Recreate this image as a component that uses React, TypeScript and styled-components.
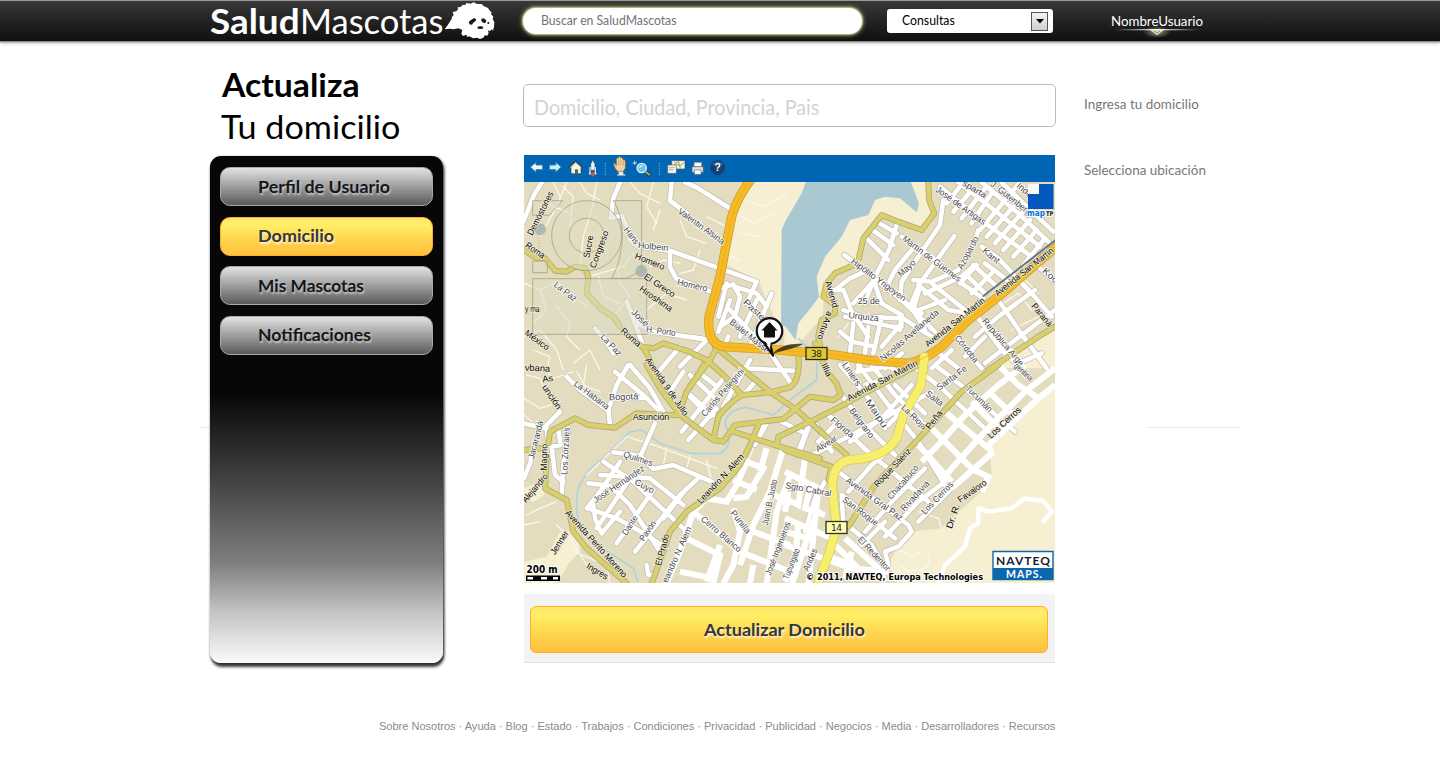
import React, { useLayoutEffect, useRef, useState } from "react";
import styled, { createGlobalStyle, css } from "styled-components";

const Global = createGlobalStyle`
  *, *::before, *::after { box-sizing: border-box; }
  body { margin: 0; background: #fff; font-family: Lato, "Open Sans", sans-serif; }
  button, input { font: inherit; }
`;

/* Text set to a fixed measure: the glyphs are condensed or widened to fill it. */
const Measure = styled.span<{ $w: number }>`
  display: inline-block;
  width: ${(p) => p.$w}px;
  white-space: nowrap;
  text-align: left;
`;
const Glyphs = styled.span`
  display: inline-block;
  transform-origin: 0 50%;
`;
function Fit({ w, children }: { w: number; children: React.ReactNode }) {
  const ref = useRef<HTMLSpanElement>(null);
  const [scale, setScale] = useState(1);
  useLayoutEffect(() => {
    if (ref.current) setScale(w / ref.current.offsetWidth);
  }, [w]);
  return (
    <Measure $w={w}>
      <Glyphs ref={ref} style={{ transform: `scaleX(${scale})` }}>{children}</Glyphs>
    </Measure>
  );
}

const Page = styled.div`
  position: relative;
  width: 1440px;
  height: 770px;
  overflow: hidden;
  background: #fff;
`;
const Header = styled.header`
  display: flex;
  align-items: center;
  height: 41px;
  padding-left: 210px;
  border-top: 1px solid #9a9a9a;
  background: linear-gradient(#383838, #232323 50%, #101010);
  box-shadow: 0 1px 1px #8a8a8a, 0 2px 3px #aaa;
`;
const Logo = styled.div`
  display: flex;
  align-items: center;
  width: 313px;
  height: 40px;
  color: #fff;
  font-size: 34px;
  line-height: 40px;
  b { font-weight: 700; }
`;
const DogMark = styled.svg`
  flex: none;
  width: 52px;
  height: 40px;
  margin-left: 1px;
`;
const SearchPill = styled.div`
  width: 339px;
  height: 26px;
  padding-left: 18px;
  border-radius: 13px;
  background: #fff;
  box-shadow: 0 0 2px 1px #c9cd95, 0 0 5px 1px #8a8d5c;
  color: #77717a;
  font-size: 12.5px;
  line-height: 25px;
`;
const SelectBox = styled.div`
  display: flex;
  align-items: center;
  justify-content: space-between;
  width: 166px;
  height: 24px;
  margin-left: 25px;
  padding: 0 5px 0 15px;
  border-radius: 3px;
  background: #fff;
  color: #000;
  font-size: 12.5px;
  line-height: 24px;
`;
const SelectArrow = styled.span`
  display: grid;
  place-items: center;
  width: 17px;
  height: 19px;
  border: 1px solid #555;
  background: linear-gradient(#f4f4f4, #cfcfcf);
`;
const UserName = styled.div`
  position: relative;
  margin-left: 58px;
  color: #fff;
  font-size: 13px;
  line-height: 39px;
`;
const UserGlow = styled.svg`
  position: absolute;
  left: 0;
  top: 23px;
  width: 92px;
  height: 14px;
`;
const Hairline = styled.i<{ $x: number; $w: number }>`
  position: absolute;
  left: ${(p) => p.$x}px;
  top: 427px;
  width: ${(p) => p.$w}px;
  height: 1px;
  background: #ebebeb;
`;
const Main = styled.main`
  position: relative;
  display: grid;
  grid-template-columns: 233px 533px 160px;
  column-gap: 80px;
  height: 622px;
  padding-left: 210px;
`;
const Aside = styled.aside`
  padding-top: 22px;
`;
const Title = styled.h1<{ $strong?: boolean }>`
  margin: 0;
  padding-left: ${(p) => (p.$strong ? 12 : 11)}px;
  height: 42px;
  color: #000;
  font-size: 33px;
  font-weight: ${(p) => (p.$strong ? 700 : 400)};
  line-height: 43px;
`;
const SideMenu = styled.nav`
  display: flex;
  flex-direction: column;
  gap: 10.67px;
  height: 507px;
  margin-top: 9px;
  padding: 11px 10px;
  border-radius: 11px;
  background: linear-gradient(#070707 0 47%, #3b3b3b 62%, #808080 80.5%, #c4c4c4 90%, #fafafa);
  box-shadow: 1px 4px 3px rgba(0, 0, 0, 0.75), 1px 1px 3px rgba(0, 0, 0, 0.45);
`;
const gold = css`
  border: 1px solid #ffae2b;
  background: linear-gradient(#ffe86a, #ffee66 20%, #ffd34c 62%, #ffc13c);
  color: #363636;
  text-shadow: 1px 2px 2px rgba(255, 255, 255, 0.8);
`;
const MenuItem = styled.button<{ $active?: boolean }>`
  flex: none;
  width: 213px;
  height: 39px;
  padding: 0 0 0 37px;
  border: 1px solid #a9a9a9;
  border-radius: 10px;
  background: linear-gradient(#e2e2e2, #5a5a5a);
  color: #161616;
  font-size: 17.5px;
  font-weight: 700;
  line-height: 36px;
  text-align: left;
  text-shadow: 1px 2px 2px rgba(255, 255, 255, 0.55);
  ${(p) => p.$active && gold}
`;
const Center = styled.section`
  padding-top: 43px;
`;
const AddressField = styled.div`
  width: 533px;
  height: 43px;
  padding-left: 10px;
  border: 1px solid #bcbcbc;
  border-radius: 5px;
  background: #fff;
  color: #d3d3d3;
  font-size: 21px;
  line-height: 43px;
`;
const MapFrame = styled.div`
  width: 531px;
  margin: 28px 0 0 1px;
`;
const MapToolbar = styled.div`
  height: 27px;
  background: #0066b3;
  svg { display: block; }
`;
const MapCanvas = styled.svg`
  display: block;
  width: 531px;
  height: 401px;
  background: #e4dcbe;
`;
const SubmitPanel = styled.div`
  width: 531px;
  height: 69px;
  margin: 11px 0 0 1px;
  padding: 12px 7px 0 6px;
  border-bottom: 1px solid #e0e0e0;
  border-radius: 3px 3px 0 0;
  background: #f3f3f3;
`;
const SubmitButton = styled.button`
  display: block;
  width: 518px;
  height: 47px;
  padding: 0 0 0 173px;
  border-radius: 6px;
  ${gold}
  font-size: 17.5px;
  font-weight: 700;
  line-height: 45px;
  text-align: left;
`;
const Hints = styled.div`
  display: flex;
  flex-direction: column;
  gap: 46px;
  padding-top: 53px;
  margin-left: -52px;
  color: #777;
  font-size: 13px;
  line-height: 20px;
`;
const Footer = styled.footer`
  display: flex;
  justify-content: flex-end;
  width: 1055px;
  padding-top: 56px;
  color: #8b8b8b;
  font-family: "Liberation Sans", Arial, sans-serif;
  font-size: 11px;
  line-height: 14px;
`;

/* Map tiles: each is digitised at three units per pixel from its own origin. */
type Tile = 0 | 1 | 2 | 3 | 4;
const origin = ["translate(520 150)", "translate(785 150)", "translate(520 365)", "translate(785 365)", "translate(690 300)"];
const at = (t: Tile) => `${origin[t]} scale(.33333)`;

type Kind = "lane" | "street" | "avenue" | "route" | "highway";
const paint: Record<Kind, { w: number; fill: string; edge?: string; edgeW?: number }> = {
  lane: { w: 4, fill: "#faf7ec" },
  street: { w: 13.5, fill: "#ffffff", edge: "#c3beb2", edgeW: 18 },
  avenue: { w: 13, fill: "#d9d06c", edge: "#b0a978", edgeW: 18 },
  route: { w: 24, fill: "#f7ef6a", edge: "#d0c766", edgeW: 28 },
  highway: { w: 23, fill: "#f6bb24", edge: "#cf9c33", edgeW: 28 },
};

const roads: Record<Kind, [Tile, string][]> = {
  lane: [
    [0, "M140 97L110 170L60 260M60 150L150 190M230 97L215 180L190 260L180 350M130 110L160 140L150 230M330 97L360 130L420 160M400 97L380 170L410 220M12 400L60 420L110 395L140 420L200 470M60 420L80 480L40 520M110 470L150 520L140 560L180 600M12 560L60 540L110 600L130 660M205 380L240 370L310 350L340 310M280 500L330 440L300 400L290 350M380 480L440 430L500 450M420 180L400 240M480 210L500 260L560 280M540 300L520 360L480 370M560 200L620 230M650 190L700 220L760 190M660 250L720 260M680 150L730 170L800 130M600 310L660 330"],
    [0, "M40 600L90 620L80 660M160 640L210 600L240 660M390 350L430 330L480 340M235 380L250 440L300 460M100 97L120 140M180 97L200 130L240 150"],
    [1, "M160 560L190 520M640 470L700 430L740 480M680 540L760 500M720 390L760 430"],
    [2, "M12 100L60 130L120 110M20 30L60 40L80 90M60 0L100 40L160 20M200 0L190 60L240 80M200 330L320 215L400 240L590 310M440 250L430 300M510 270L500 310M560 285L575 350L530 345M12 150L60 190M20 450L60 430L110 410M12 480L60 470M110 480L150 520L200 600M160 560L260 600L270 655M700 250L680 300M170 20L210 90"],
    [3, "M450 390L500 370L560 310M400 440L460 460L470 490M330 550L380 575L410 560M345 600L370 620L420 610Q440 590 430 570"],
  ],
  street: [
    [0, "M10 215L42 135L70 90M300 97L280 145L272 205L305 197L325 240L330 270L350 287L450 302L710 395L680 460M455 97L450 152L500 190M495 97L530 112L630 175M450 302L450 350L468 385L580 428M320 455L345 520L370 590M345 515L400 545L570 570M225 535L260 575L280 610M600 415L640 403L660 440L645 500L600 530M620 400L595 500M650 412L710 430L740 470M755 430L690 590M630 480L740 600M625 560L612 590M480 590L420 660M560 570L480 650"],
    [1, "M465 110L590 212L740 320M520 97L640 190L765 290M590 97L700 190L790 275M650 97L805 245M485 160L535 97M505 185L565 115M530 205L600 115M560 220L620 130M585 240L665 145L705 97M605 260L685 170M630 280L710 190M655 300L735 210M685 320L755 240M715 345L780 265M475 150L465 225L400 320L350 395L345 450M335 225L312 300L265 390L240 460M245 265L310 330M260 238L325 285M275 215L335 250M350 260L440 320L530 400L595 445M508 258L405 400L375 470M178 315L250 370L350 450L410 490M400 405L490 480L550 490M385 390L440 395L520 360L570 270L580 240M420 430L530 380L570 345M540 370L600 430M565 345L630 405M525 400L575 345M560 430L620 370M590 290L640 325L740 430M600 340L680 400M150 420L195 385L250 360M140 420L175 420L200 485L250 560M265 390L290 460L350 495L345 540M175 480L230 500L345 505M180 500L320 530L350 530M165 545L200 575L270 590M205 520L195 610M250 530L240 610M290 500L265 610M350 520L290 590M345 500L440 560M350 450L450 545M400 480L480 450M440 400L540 480L580 500M405 410L385 480L420 540M205 460L260 400M380 300L330 360L300 420"],
    [1, "M640 450L715 560L785 655M700 390L740 430L800 500M570 490L650 600L700 645M510 560L590 655M450 600L520 655M570 560L640 500L750 420M600 640L690 570L810 480M540 620L600 560M760 350L810 395M500 600L440 655M640 640L680 600M700 640L770 610M350 610L300 655M390 655L400 630M180 620L190 655M230 630L220 655M290 640L330 660"],
    [2, "M140 35L180 75L262 135M270 180L265 135L290 60L325 0M285 20L370 90L430 150M330 0L390 70L430 140M275 100L380 98M405 175L365 265M120 140L75 185M12 175L80 190L85 240M115 195L122 240L95 245L105 330L130 350M145 190L130 300L125 395M35 250L32 290L12 340M280 262L360 272L400 312L460 300L540 335L575 350M250 290L340 350L500 500M240 330L390 340L490 420M205 355L270 362L330 420L420 560M200 430L240 380L300 290M230 490L330 340M290 535L400 375M345 560L480 390L540 335M205 430L290 460L380 510L440 550M220 420L225 460L245 505L300 440M430 460L500 370M380 600L385 630L405 630M485 200L560 105L610 40M505 225L590 130M450 80L490 20M510 90L580 150M740 175L705 240"],
    [4, "M0 225L70 290M25 215L75 255M0 290L60 350M155 205L310 212M245 165L300 245M275 365L345 400L330 450M355 380L320 465M220 375L200 420M200 240L165 280M100 320L180 180M0 110L60 120M120 0L85 95M200 0L150 110"],
    [3, "M165 0L260 110L300 190M220 0L310 120L400 230L480 360M260 0L330 90L420 180M170 90L230 170L330 270M130 150L260 270L430 410M160 320L370 480M170 390L330 520M80 270L200 210L330 140L440 80M195 230L290 160L380 60M215 20L330 0M240 60L350 30M330 60L420 145M190 380L260 300L330 240M240 500L330 400L420 310M300 515L400 410L480 350M400 470L520 350M370 480L380 500L340 545L300 560L310 600M170 400L175 470L260 540L300 610M70 190L40 270M95 180L140 260M160 170L100 230M230 540L300 470M120 350L90 400L60 500M380 110L310 180"],
    [3, "M380 0L470 70L610 200M450 0L540 70L690 200"],
  ],
  avenue: [
    [0, "M12 300L50 325L75 325L105 362L140 365L165 350L195 355L205 380L200 430L240 475L280 500L300 530M340 570L370 592L385 620L400 660M365 590L400 595L430 580L500 602"],
    [1, "M430 97L432 150L448 190L410 240L340 215L290 195L235 265L218 340L150 370L125 400L115 440L150 465L150 490L110 510L100 560L108 600M810 530L760 560L640 640L610 660"],
    [2, "M12 255L60 250M85 235L90 200L165 160L205 180L285 188L320 165L350 145L440 150L475 150L500 80L540 20L550 0M80 280L75 370L140 405L160 500L200 550L320 655M380 0L420 70L480 150L580 225M715 180L690 240L660 300L600 370L500 440L450 500L430 560L395 655"],
    [4, "M75 140L240 275L320 330L470 465M80 145L60 180L0 260M-10 152L50 180L100 225L155 285L240 277L300 262Q332 240 325 165M70 420L85 350Q120 305 155 287M70 420L100 425L135 375L280 357L360 290L430 300L452 285L440 250L410 215L375 130M130 395L260 437L390 475M350 370L480 305M260 437L265 410L350 370"],
    [3, "M190 110L400 0M0 255L140 305L130 345M640 0L530 80L430 190L270 360L190 485"],
  ],
  route: [[3, "M418 -25L408 60L355 150L335 220Q300 280 190 285Q140 300 142 370L155 490L130 570L95 665"]],
  highway: [
    [0, "M695 85Q650 145 635 200L600 380L567 500Q560 580 610 590L810 602"],
    [1, "M0 602L130 612L260 632L370 640Q420 630 470 590L550 510L640 440L820 285"],
  ],
};

/* Streets of the unmapped southern blocks carry no outline. */
const blocks: [Tile, string][] = [
  [2, "M520 440L480 560L440 655M520 440L560 400L620 410L650 360L680 290L730 310L680 395L640 400M640 430L660 500L640 600L610 655M520 440L660 560L810 620M740 250L720 320M790 250L750 380L700 480L660 600M750 380L810 420M700 500L810 540M500 520L600 570L580 655M640 345L710 375M480 620L580 640M700 600L690 655M770 440L740 655M600 540L560 650M810 330L770 440"],
  [3, "M0 320L100 370L70 660M0 460L140 520M40 470L30 600L0 650M100 430L60 540L20 660M0 540L200 610L310 620M120 570L200 600M10 380L0 440M60 280L40 420L0 400M80 350L60 430L120 450M180 520L280 610L300 650M150 540L230 620M0 500L70 520M200 560L180 640"],
  [3, "M720 0L640 60L540 150L460 240L410 290M810 10L720 80L600 200L500 310L470 350M760 100L700 60L640 0M690 155L610 80M650 200L560 110M610 250L480 140M560 310L440 190M500 350L400 240M810 60L760 100L610 240L620 265L500 370M555 310L610 335L590 380"],
];

type Label = [Tile, number, number, number, number, string, 0 | 1];
const labels: Label[] = [
  [0, 37, 258, 101, 130, "Demóstones", 1], [0, 14, 290, 67, 326, "Roma", 1],
  [0, 208, 325, 220, 258, "Sucre", 1], [0, 226, 356, 266, 246, "Congreso", 1],
  [0, 472, 188, 606, 284, "Valentin Alsina", 0], [0, 310, 240, 345, 285, "Hans", 0],
  [0, 353, 294, 444, 303, "Holbein", 0], [0, 343, 325, 430, 360, "Homero", 1],
  [0, 470, 404, 560, 425, "Homero", 0], [0, 370, 384, 458, 443, "El Greco", 1],
  [0, 356, 421, 450, 486, "Hiroshima", 1], [0, 100, 407, 162, 456, "La Paz", 0],
  [0, 240, 562, 294, 620, "La Paz", 0], [0, 332, 488, 376, 532, "José", 0], [0, 378, 546, 466, 558, "H. Porto", 0],
  [0, 300, 545, 354, 592, "Roma", 1], [0, 12, 553, 80, 602, "México", 1],
  [0, 15, 485, 58, 486, "y ma", 1], [0, 668, 459, 725, 513, "Paste", 0],
  [0, 627, 520, 740, 610, "Bialet Masse", 0],
  [1, 450, 123, 595, 226, "José de Artigas", 0], [1, 530, 105, 598, 145, "sparta", 0],
  [1, 615, 106, 730, 196, "J. Gutenberg", 0], [1, 693, 110, 733, 144, "Inde", 0],
  [1, 350, 270, 520, 397, "Martín de Güemes", 0], [1, 196, 338, 355, 455, "Hipólito Yrigoyen", 0],
  [1, 348, 382, 394, 340, "Mayo", 0], [1, 532, 360, 582, 265, "Azopardo", 0],
  [1, 590, 305, 635, 342, "Kant", 0], [1, 218, 463, 284, 463, "25 de", 0],
  [1, 190, 504, 280, 514, "Urquiza", 0], [1, 295, 635, 463, 490, "Nicolás Avellaneda", 0],
  [1, 429, 592, 602, 455, "Avenida San Martín", 1], [1, 638, 440, 808, 305, "Avenida San Martín", 1],
  [1, 738, 469, 790, 532, "Paraná", 1], [1, 590, 514, 705, 650, "República Arge", 0],
  [1, 508, 565, 568, 640, "Córdoba", 0], [1, 770, 365, 810, 400, "Koc", 0],
  [1, 120, 395, 143, 475, "Avenid", 1], [1, 127, 482, 96, 565, "a Arturo", 1],
  [1, 108, 645, 126, 682, "Illia", 1],
  [2, 14, 17, 90, 20, "vbana", 1], [2, 68, 52, 100, 48, "As", 1], [2, 65, 67, 112, 135, "unción", 1],
  [2, 160, 60, 260, 135, "La Habana", 0], [2, 267, 106, 355, 103, "Bogotá", 0],
  [2, 338, 166, 448, 166, "Asunción", 1], [2, 375, -15, 492, 155, "Avenida 9 de Julio", 1],
  [2, 555, 157, 674, 20, "Carlos Pellegrini", 0], [2, 42, 283, 70, 170, "Jacarandá", 0],
  [2, 80, 317, 82, 237, "Magno", 1], [2, 18, 415, 85, 335, "Alejandro", 1],
  [2, 142, 330, 149, 188, "Los Zorzales", 0], [2, 308, 275, 395, 304, "Quilmes", 0],
  [2, 228, 415, 375, 315, "José Hernández", 0], [2, 342, 357, 397, 386, "Cuyo", 0],
  [2, 320, 513, 354, 458, "Dante", 0], [2, 371, 530, 410, 475, "Pavón", 0],
  [2, 543, 418, 674, 277, "Leandro N. Alem", 1], [2, 541, 465, 655, 563, "Cerro Blanco", 0],
  [2, 423, 604, 448, 510, "El Prado", 1], [2, 442, 655, 516, 490, "eandro N. Alem", 0],
  [2, 134, 445, 310, 640, "Avenida Perito Moreno", 1], [2, 105, 571, 147, 504, "Jenner", 1],
  [2, 197, 608, 258, 645, "Ingres", 1], [2, 630, 445, 680, 508, "Punilla", 0],
  [2, 743, 482, 772, 345, "Juan B. Justo", 0], [2, 752, 633, 812, 475, "José Ingenieros", 0],
  [3, 192, 109, 400, 0, "Avenida San Martín", 1], [3, 170, 0, 215, 65, "Liniers", 0],
  [3, 240, 110, 294, 190, "Maipú", 0], [3, 192, 137, 255, 222, "Belgrano", 0],
  [3, 135, 168, 198, 220, "Florida", 0], [3, 99, 262, 158, 225, "Alvear", 0],
  [3, 347, 130, 415, 195, "La Rioja", 0], [3, 420, 90, 467, 125, "Salta", 0],
  [3, 463, 77, 548, 15, "Santa Fe", 0], [3, 540, 72, 612, 143, "Tucumán", 0],
  [3, 434, 195, 474, 145, "Peña", 1], [3, 278, 368, 380, 260, "Roque Sáenz", 1],
  [3, 180, 350, 346, 468, "Avenida Gral Paz", 0], [3, 170, 408, 272, 484, "San Roque", 0],
  [3, 318, 405, 402, 310, "Chacabuco", 0], [3, 358, 440, 435, 357, "Rivadavia", 0],
  [3, 420, 450, 507, 360, "Los Cerros", 0], [3, 618, 222, 710, 137, "Los Cerros", 1],
  [3, 500, 493, 525, 420, "Dr. R.", 1], [3, 526, 414, 607, 357, "Favaloro", 1],
  [3, 0, 370, 137, 394, "Sgto Cabral", 0], [3, 217, 525, 305, 620, "El Redentor", 0],
  [3, 685, 5, 735, 50, "gentina", 0], [3, 10, 645, 45, 555, "Tupungato", 0],
  [3, 70, 620, 98, 555, "Andes", 0],
];

function StreetLabel({ l: [t, x1, y1, x2, y2, name, dark] }: { l: Label }) {
  const len = Math.hypot(x2 - x1, y2 - y1);
  const deg = (Math.atan2(y2 - y1, x2 - x1) * 180) / Math.PI;
  return (
    <g transform={at(t)}>
      <text
        transform={`translate(${x1} ${y1}) rotate(${deg})`}
        textLength={len}
        lengthAdjust="spacingAndGlyphs"
        fontFamily="Liberation Sans, Arial, sans-serif"
        fontSize="27"
        fill={dark ? "#080808" : "#454545"}
        stroke={dark ? "#f1ecd6" : "#fff"}
        strokeWidth="5"
        strokeLinejoin="round"
        paintOrder="stroke"
      >
        {name}
      </text>
    </g>
  );
}

function CityMap() {
  const kinds: Kind[] = ["lane", "street", "avenue", "highway", "route"];
  return (
    <MapCanvas viewBox="524 182 531 401">
      <g fill="#f6efd2">
        <path transform={at(0)} d="M700 90L812 90V570L770 520L740 450L715 390L620 345L640 210Z" />
        <path transform={at(1)} d="M-2 90H428L440 185L410 235L330 215L290 195L235 265L215 345L140 375L120 400L112 500L60 560L30 600L-2 600ZM812 530L700 595L640 655H812Z" />
        <path transform={at(2)} d="M12 370L60 350L75 390L40 410L12 400ZM12 655V590L80 575L120 500L175 500L180 560L150 590L110 655Z" />
        <path transform={at(3)} d="M815 55L760 100L700 155L615 245L620 330L600 370L500 460L470 490L380 500L335 550L310 600L340 660H815Z" />
      </g>
      <path fill="#a9c8d2" transform={at(1)} d="M65 90L50 130L0 215L-10 240L-12 525L2 530L32 570L40 520L80 470L102 440L95 380L120 320L170 260L195 210L250 195L270 150L300 140L345 145L395 187L402 160L375 90Z" />
      <g fill="none" stroke="#b0d2da" strokeWidth="5">
        <path transform={at(2)} d="M355 655L340 610L210 525Q160 480 172 380Q190 320 250 280L330 200L365 195L420 235L510 265" />
        <path transform={at(4)} d="M0 460L90 460Q135 440 105 370Q110 330 170 322L250 345L300 300L380 240L380 170L325 115" />
      </g>
      <g fill="none" strokeLinejoin="round" strokeLinecap="round">
        {kinds.map((k) => (
          <g key={k}>
            {paint[k].edge &&
              roads[k].map(([t, d], i) => (
                <path key={i} transform={at(t)} d={d} stroke={paint[k].edge} strokeWidth={paint[k].edgeW} />
              ))}
            {roads[k].map(([t, d], i) => (
              <path key={i} transform={at(t)} d={d} stroke={paint[k].fill} strokeWidth={paint[k].w} />
            ))}
            {k === "street" &&
              blocks.map(([t, d], i) => (
                <path key={`b${i}`} transform={at(t)} d={d} stroke="#fff" strokeWidth="18" strokeLinejoin="miter" strokeLinecap="butt" />
              ))}
          </g>
        ))}
        {roads.highway.map(([t, d], i) => (
          <path key={i} transform={at(t)} d={d} stroke="#e3a71f" strokeWidth="2" />
        ))}
        <path transform={at(1)} d="M595 438L812 270" stroke="#65798a" strokeWidth="6" />
        <path transform={at(3)} d="M460 660L480 600L540 545L555 490L580 475L580 430L610 440L680 430L720 400L775 408L800 440L775 470" stroke="#fff" strokeWidth="13" />
      </g>

      <g transform={at(0)} fill="#d9dcc3" fillOpacity=".5" stroke="#8e8e78" strokeOpacity=".6" strokeWidth="3">
        <path d="M38 152H128L88 196H38ZM280 152H365V362L320 385H275Q306 330 307 255Q306 190 280 152ZM38 333H82V368H38Z" />
        <path fillRule="evenodd" d="M200 152a105 105 0 1 0 .1 0ZM200 205a52 52 0 1 1-.1 0Z" />
        <rect x="38" y="386" width="342" height="167" />
        <path d="M57 215V320" strokeDasharray="3 5" />
        <g fill="#9fb0ad" fillOpacity=".8" stroke="none"><circle cx="60" cy="238" r="18" /><circle cx="364" cy="363" r="18" /></g>
      </g>

      {labels.map((l, i) => <StreetLabel key={i} l={l} />)}

      <g fontFamily="DejaVu Sans, sans-serif">
        <path d="M773 354C778 346 792 343 803 344C798 348 786 349 773 354Z" fill="#1b1808" opacity=".75" />
        <path d="M762 340L773 355.500L770 343Z" fill="#fff" stroke="#111" strokeWidth="2.200" strokeLinejoin="round" />
        <circle cx="769.5" cy="331" r="12.8" fill="#fff" stroke="#111" strokeWidth="2.2" />
        <path d="M763.500 339L770 348L771 340Z" fill="#fff" />
        <path d="M769.5 322L761.5 330.500H764V337.500H775V330.500H777.500Z" fill="#111" />
        <rect x="806" y="347.500" width="21" height="12" fill="#ddc936" stroke="#302c0c" strokeWidth="1.3" />
        <text x="811" y="357" fontSize="9" textLength="11" fill="#222">38</text>
        <rect x="826" y="521.500" width="21" height="12" fill="#fffbb1" stroke="#30301c" strokeWidth="1.3" />
        <text x="831" y="531" fontSize="9" textLength="11" fill="#222">14</text>
      </g>

      <path d="M1028 184H1053.500V209H1028Z" fill="#0457bf" />
      <path d="M1028 184H1039V194H1028Z" fill="#f7f9fb" />
      <g fontFamily="DejaVu Sans, sans-serif" fontWeight="700" stroke="#fff" strokeWidth="2" paintOrder="stroke">
        <text x="1027" y="216" fontSize="9" textLength="18" lengthAdjust="spacingAndGlyphs" fill="#0872d3">map</text>
        <text x="1046" y="216" fontSize="6.500" textLength="7.500" lengthAdjust="spacingAndGlyphs" fill="#111">TP</text>
        <text x="526.500" y="573" fontSize="10" textLength="31" lengthAdjust="spacingAndGlyphs" fill="#000">200 m</text>
        <text x="806" y="580" fontSize="9.500" textLength="177" lengthAdjust="spacingAndGlyphs" fill="#000">© 2011, NAVTEQ, Europa Technologies</text>
      </g>
      <path d="M526 575.500H560V581H526Z" fill="#000" />
      <path d="M527.500 577H533V579.500H527.500ZM541 577H547V579.500H541ZM553 577H558V579.500H553Z" fill="#fff" />

      <path d="M993 551.500H1053V579.500H993Z" fill="#fff" stroke="#0d67ae" strokeWidth="1.400" />
      <path d="M993 568H1053V580H993Z" fill="#0d67ae" />
      <g fontFamily="Lato, sans-serif" fontWeight="700">
        <text x="996" y="564.500" fontSize="12" textLength="54" fill="#123">NAVTEQ</text>
        <text x="1006" y="578" fontSize="10.500" textLength="36" fill="#fff">MAPS.</text>
      </g>
    </MapCanvas>
  );
}

function ToolbarIcons() {
  return (
    <svg width="240" height="27" viewBox="0 0 720 81">
      <g transform="translate(-12 -15)" strokeLinejoin="round">
        <path d="M31 51L48 37V45H68V59H48V67Z" fill="#edf9fc" stroke="#2e80a2" strokeWidth="3" />
        <path d="M124 51L107 37V45H88V59H107V67Z" fill="#c8f2fa" stroke="#2e80a2" strokeWidth="3" />
        <path d="M153 51V71H183V51L167 38Z" fill="#f7f4e7" stroke="#38464f" strokeWidth="2" />
        <path d="M147 53L167 34L187 53" fill="none" stroke="#30363a" strokeWidth="5" />
        <path d="M150 53L167 37L184 53" fill="none" stroke="#fff" strokeWidth="2.500" />
        <path d="M165 58H174V71H165Z" fill="#536e3d" />
        <path d="M218 29L225 42V61H212V42Z" fill="#eef0f3" stroke="#3d454c" strokeWidth="2" />
        <path d="M210 51V74M226 51V74M206 70H213M223 70H230" stroke="#d3dce2" strokeWidth="4" />
        <path d="M211 72L218 65L225 72L218 81Z" fill="#e25336" />
        <path d="M256 39V76M418 39V76" stroke="#75addc" strokeWidth="3" strokeDasharray="4 4" />
        <path d="M286 56L280 41Q282 36 289 46V26Q292 21 295 26V22Q299 16 302 23V24Q307 20 309 27V30Q315 26 316 34V55L309 65H294Z" fill="#efd39c" stroke="#766044" strokeWidth="2" />
        <path d="M296 31V46M303 29V46M310 32V47" stroke="#9c7c50" strokeWidth="1.500" />
        <path d="M295 64H309L311 73H316V77H291V73H296Z" fill="#e9ebe7" stroke="#65727a" strokeWidth="1.500" />
        <path d="M338 39H351M344 32V45" stroke="#d6effc" strokeWidth="2.500" />
        <path d="M376 65L391 79" stroke="#453629" strokeWidth="8" />
        <path d="M377 65L389 76" stroke="#d9bd69" strokeWidth="4" />
        <circle cx="365" cy="54" r="14" fill="#72c5e9" stroke="#e2f2f5" strokeWidth="4" />
        <path d="M359 54A8 8 0 0 1 368 47" fill="none" stroke="#fff" strokeWidth="3" />
        <path d="M455 32H495V57H455Z" fill="#f6f4e6" stroke="#4c5256" strokeWidth="2" />
        <path d="M457 47L470 41L479 48L493 37M475 33L481 55" fill="none" stroke="#88ad67" strokeWidth="3" />
        <path d="M462 38H473" stroke="#d8a547" strokeWidth="3" />
        <path d="M443 45H469V70H443Z" fill="#f7f6ed" stroke="#59636a" strokeWidth="2" />
        <path d="M447 53H464M447 59H460" stroke="#7ea4bb" strokeWidth="2.500" />
        <path d="M522 37H545V51H522Z" fill="#fff" stroke="#68717a" strokeWidth="2" />
        <path d="M516 50H550V67H516Z" fill="#dde0e3" stroke="#525c65" strokeWidth="2" />
        <path d="M523 60H543V73H523Z" fill="#fff" stroke="#6d747c" strokeWidth="2" />
        <circle cx="593" cy="53" r="21" fill="#173f70" stroke="#0b3a69" strokeWidth="2" />
        <path d="M578 44Q593 31 608 44" fill="none" stroke="#476b94" strokeWidth="4" />
        <text x="593" y="64" textAnchor="middle" fontFamily="Liberation Sans, Arial, sans-serif" fontSize="31" fontWeight="700" fill="#fff">?</text>
      </g>
    </svg>
  );
}

const menu: [string, number][] = [
  ["Perfil de Usuario", 132],
  ["Domicilio", 76],
  ["Mis Mascotas", 106],
  ["Notificaciones", 113],
];
const links = ["Sobre Nosotros", "Ayuda", "Blog", "Estado", "Trabajos", "Condiciones", "Privacidad", "Publicidad", "Negocios", "Media", "Desarrolladores", "Recursos"];

export default function App() {
  return (
    <Page>
      <Global />
      <Header>
        <Logo>
          <Fit w={90}><b>Salud</b></Fit>
          <Fit w={143}>Mascotas</Fit>
          <DogMark viewBox="733 3 156 120">
            <path fill="#fff" d="M735 88Q745 75 750 66Q758 57 757 50L762 46L759 36L770 34L775 28L774 22L783 21L789 15L798 14L800 9L812 11L822 7L832 12L846 12L853 19L865 24L871 33L876 37L874 42L881 50L879 57L884 66L883 80L880 92L876 88L870 94L865 90L867 100L862 108L856 105L851 113L841 117L832 113L820 115L809 109L803 111L800 104L790 108L785 101L788 90L776 85L762 88L750 86Z" />
            <g fill="#171717">
              <ellipse cx="819" cy="63" rx="11" ry="5.500" transform="rotate(-32 819 63)" />
              <circle cx="814" cy="68" r="6" />
              <ellipse cx="852" cy="62" rx="8" ry="6" transform="rotate(35 852 62)" />
              <ellipse cx="842" cy="83" rx="9" ry="4" />
              <circle cx="866" cy="69" r="3" />
            </g>
          </DogMark>
        </Logo>
        <SearchPill><Fit w={136}>Buscar en SaludMascotas</Fit></SearchPill>
        <SelectBox>
          <Fit w={53}>Consultas</Fit>
          <SelectArrow><svg width="8" height="5"><path d="M0 0H8L4 4.500Z" fill="#000" /></svg></SelectArrow>
        </SelectBox>
        <UserName>
          <Fit w={92}>NombreUsuario</Fit>
          <UserGlow viewBox="0 0 92 14">
            <defs>
              <linearGradient id="beam"><stop stopColor="#fff" stopOpacity="0" /><stop offset=".5" stopColor="#fffff0" /><stop offset="1" stopColor="#fff" stopOpacity="0" /></linearGradient>
              <radialGradient id="halo"><stop stopColor="#e8edba" stopOpacity=".6" /><stop offset="1" stopColor="#e8edba" stopOpacity="0" /></radialGradient>
            </defs>
            <ellipse cx="46" cy="7" rx="14" ry="6" fill="url(#halo)" />
            <rect x="4" y="4" width="84" height="1.300" fill="url(#beam)" />
            <path d="M39 5H53L46 10.500Z" fill="#dfe1c6" />
            <path d="M41 7L46 10.500L51 7M43 6L46 8L49 6" stroke="#65674f" strokeWidth=".7" fill="none" />
          </UserGlow>
        </UserName>
      </Header>
      <Hairline $x={200} $w={10} />
      <Hairline $x={1146} $w={94} />
      <Main>
        <Aside>
          <Title $strong><Fit w={138}>Actualiza</Fit></Title>
          <Title as="h2"><Fit w={179}>Tu domicilio</Fit></Title>
          <SideMenu>
            {menu.map(([name, w], i) => (
              <MenuItem key={name} $active={i === 1}><Fit w={w}>{name}</Fit></MenuItem>
            ))}
          </SideMenu>
        </Aside>
        <Center>
          <AddressField><Fit w={285}>Domicilio, Ciudad, Provincia, Pais</Fit></AddressField>
          <MapFrame>
            <MapToolbar><ToolbarIcons /></MapToolbar>
            <CityMap />
          </MapFrame>
          <SubmitPanel>
            <SubmitButton><Fit w={161}>Actualizar Domicilio</Fit></SubmitButton>
          </SubmitPanel>
        </Center>
        <Hints>
          <Fit w={115}>Ingresa tu domicilio</Fit>
          <Fit w={122}>Selecciona ubicación</Fit>
        </Hints>
      </Main>
      <Footer><Fit w={676}>{links.join(" · ")}</Fit></Footer>
    </Page>
  );
}
